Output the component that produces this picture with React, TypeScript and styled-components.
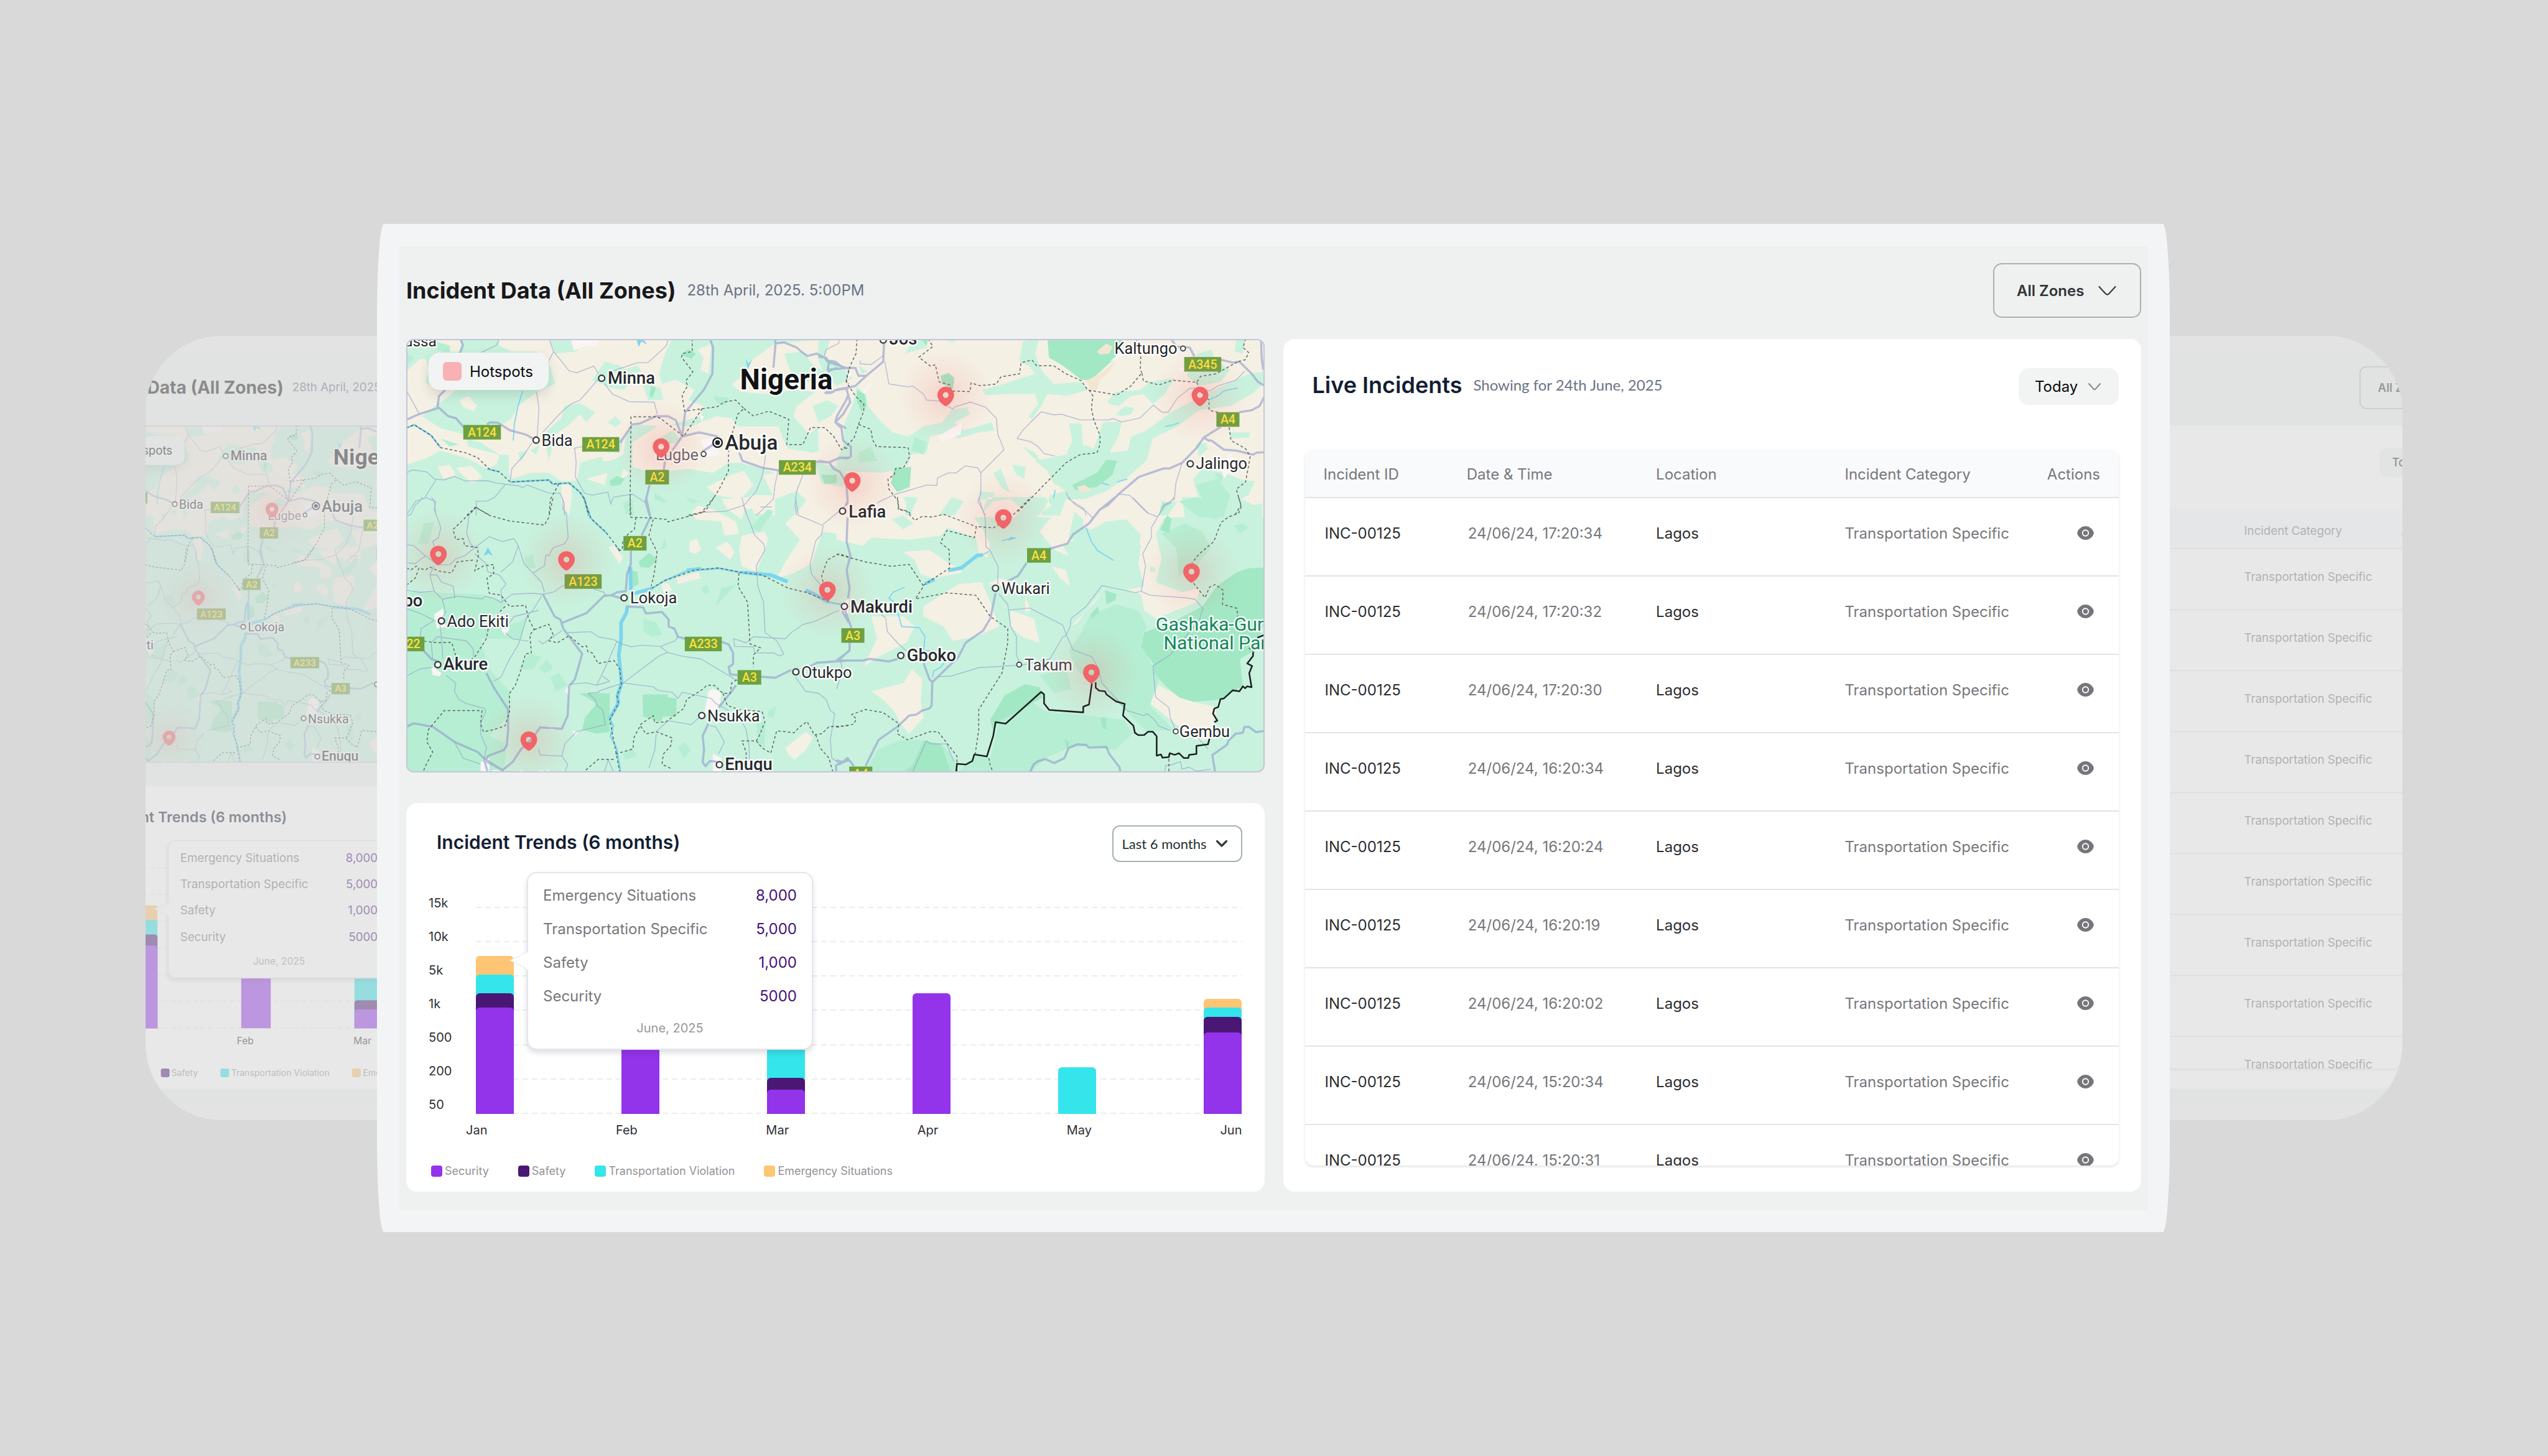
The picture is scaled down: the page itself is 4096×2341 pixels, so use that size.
import React, { useId } from "react";
import styled, { createGlobalStyle, css } from "styled-components";

const GlobalStyle = createGlobalStyle`
  *, *::before, *::after { box-sizing: border-box; }
  body { margin: 0; background: #d9d9d9; }
  h1, h2, p, ul, dl, dd, dt { margin: 0; padding: 0; }
  ul { list-style: none; }
`;

const sans = `Inter, "Liberation Sans", sans-serif`;

/* ---------- Stage ---------- */

const Stage = styled.main`
  min-height: 100vh;
  display: grid;
  align-items: center;
  overflow: hidden;
  background: #d9d9d9;
  font-family: ${sans};
  font-size: 24px;
  color: #1c1c1e;
`;

const Backdrop = styled.div`
  grid-area: 1 / 1;
  display: flex;
  justify-content: space-between;
  padding: 0 234px;
  opacity: 0.4;
`;

const BackdropHalf = styled.div<{ $side: "left" | "right" }>`
  display: flex;
  width: 420px;
  height: 1261px;
  overflow: hidden;
  justify-content: ${(p) => (p.$side === "left" ? "flex-start" : "flex-end")};
  border-radius: ${(p) =>
    p.$side === "left" ? "122px 0 0 122px" : "0 122px 122px 0"};
`;

const Shrunk = styled.div<{ $side: "left" | "right" }>`
  flex: none;
  width: calc(100vw - 1215px);
  transform: scale(0.778);
  transform-origin: top ${(p) => p.$side};
  margin-${(p) => p.$side}: -152px;
`;

const Foreground = styled.div`
  grid-area: 1 / 1;
  z-index: 1;
  padding: 0 608px 0 606px;
`;

/* ---------- Frame ---------- */

const Frame = styled.div`
  padding: 36px 35px 35px 36px;
  background: #f2f4f6;
  border-radius: 11px / 150px;
`;

const Screen = styled.div`
  padding: 27px 11px 30px;
  background: #eef1f0;
`;

const TopBar = styled.header`
  display: flex;
  align-items: center;
  justify-content: space-between;
  height: 88px;
  margin-bottom: 34px;
`;

const Heading = styled.div`
  display: flex;
  align-items: center;
  gap: 18px;
`;

const PageTitle = styled.h1`
  font-size: 36px;
  font-weight: 700;
  line-height: 48px;
  color: #18181b;
`;

const Muted = styled.p<{ $face?: string }>`
  font-family: ${(p) => p.$face ?? "inherit"};
  font-size: 24px;
  line-height: 32px;
  color: #6b7285;
`;

const Columns = styled.div`
  display: grid;
  grid-template-columns: minmax(0, 1fr) minmax(0, 1fr);
  gap: 30px;
`;

const Stack = styled.div`
  display: flex;
  flex-direction: column;
  gap: 49px;
`;

const Card = styled.section`
  background: #fff;
  border-radius: 18px;
`;

const CardTitle = styled.h2<{ $large?: boolean }>`
  font-size: ${(p) => (p.$large ? 36 : 30)}px;
  font-weight: 600;
  line-height: 54px;
  color: #131e33;
`;

/* ---------- Drop-down ---------- */

const kinds = {
  zones: css`
    width: 238px;
    height: 88px;
    padding: 0 36px;
    border: 2px solid #adb0b0;
    border-radius: 14px;
    background: transparent;
    color: #333338;
    font: 600 24px ${sans};
  `,
  day: css`
    width: 161px;
    height: 59px;
    padding: 0 26px;
    border: 0;
    border-radius: 16px;
    background: #f1f4f3;
    color: #0b0b0c;
    font: 400 24px ${sans};
  `,
  range: css`
    width: 209px;
    height: 59px;
    padding: 0 14px;
    border: 2px solid #a6b2b0;
    border-radius: 12px;
    background: #fff;
    color: #24302f;
    font: 400 22px Lato, ${sans};
  `,
};

const Picker = styled.div`
  display: inline-grid;
  align-items: center;
`;

const Select = styled.select<{ $kind: keyof typeof kinds }>`
  grid-area: 1 / 1;
  appearance: none;
  margin: 0;
  ${(p) => kinds[p.$kind]}
`;

const Chevron = styled.svg<{ $inset: number }>`
  grid-area: 1 / 1;
  justify-self: end;
  margin-right: ${(p) => p.$inset}px;
  fill: none;
  stroke-linecap: round;
  stroke-linejoin: round;
  pointer-events: none;
`;

function Dropdown({ kind, label, options }: { kind: keyof typeof kinds; label: string; options: string[] }) {
  return (
    <Picker>
      <Select $kind={kind} aria-label={label}>
        {options.map((o) => (
          <option key={o}>{o}</option>
        ))}
      </Select>
      {kind === "zones" && (
        <Chevron $inset={40} width="29" height="17" viewBox="0 0 29 17" stroke="#3a3a3e" strokeWidth="2.2">
          <path d="M1.5 2 11.8 13.2Q14.5 16 17.2 13.2L27.5 2" />
        </Chevron>
      )}
      {kind === "day" && (
        <Chevron $inset={29} width="20" height="12" viewBox="0 0 20 12" stroke="#85888c" strokeWidth="2">
          <path d="M1 1 8.2 9.2Q10 11 11.8 9.2L19 1" />
        </Chevron>
      )}
      {kind === "range" && (
        <Chevron $inset={23} width="20" height="13" viewBox="0 0 20 13" stroke="#2f3d3b" strokeWidth="3.2">
          <path d="M2.5 2.5 10 10 17.5 2.5" />
        </Chevron>
      )}
    </Picker>
  );
}

/* ---------- Map ---------- */

const MapCard = styled.section`
  position: relative;
  height: 697px;
  overflow: hidden;
  border: 2px solid #c6c4d6;
  border-radius: 12px;
  background: #c8f2de;
`;

const MapSvg = styled.svg`
  display: block;
  width: 100%;
  height: 100%;
  font-family: Roboto, ${sans};
`;

const HotspotKey = styled.div`
  position: absolute;
  top: 20px;
  left: 34px;
  display: flex;
  align-items: center;
  gap: 13px;
  height: 60px;
  padding: 0 25px 0 23px;
  border-radius: 18px;
  background: #f1f4f3;
  box-shadow: 0 8px 18px rgba(60, 60, 60, 0.16);
  font-size: 24px;
  color: #0b0b0c;
`;

const HotspotSwatch = styled.span`
  width: 30px;
  height: 30px;
  border-radius: 6px;
  background: #f8b1b4;
`;

/* The map is plotted on four survey sheets; each one has an origin and a grid step. */
const sheets = {
  nw: [600, 350, 0.5102],
  ne: [1350, 350, 0.5102],
  sw: [650, 820, 0.4783],
  se: [1380, 820, 0.4783],
} as const;
type Sheet = keyof typeof sheets;
type Plot = [Sheet, string[]][];

const plot = (sheet: Sheet, points: string, close = false) => {
  const [ox, oy, step] = sheets[sheet];
  const d = points
    .split(" ")
    .map((p) => p.split(",").map(Number))
    .map(([x, y]) => `${(ox + x * step).toFixed(1)} ${(oy + y / 3).toFixed(1)}`)
    .join("L");
  return `M${d}${close ? "Z" : ""}`;
};
const plotAll = (layer: Plot, close = false) =>
  layer.map(([s, lines]) => lines.map((l) => plot(s, l, close)).join("")).join("");

const sand: Plot = [
  ["nw", [
    "440,620 1000,620 975,700 955,800 965,850 1010,830 1070,880 1050,930 1100,960 1090,1010 1000,1050 960,1060 880,1050 850,1090 840,1200 800,1230 700,1250 690,1330 640,1330 600,1290 540,1290 480,1320 470,1290 470,1200 440,1200 380,1140 330,1120 340,1060 440,1060 480,1020 500,960 560,890 620,850 600,740 560,690 480,690 440,660",
    "230,620 300,620 320,650 310,690 270,690 250,650",
    "139,790 180,730 200,722 215,780 200,840 240,880 300,880 270,920 230,960 190,1010 250,1070 330,1100 340,1160 440,1200 430,1250 400,1270 340,1220 250,1180 200,1220 160,1240 139,1250",
    "870,1140 960,1050 1060,1060 1140,1010 1190,1020 1210,1060 1340,1060 1370,1170 1450,1190 1568,1150 1568,1500 1420,1500 1440,1440 1400,1380 1330,1420 1290,1300 1330,1290 1220,1240 1180,1240 1130,1290 1050,1270 930,1290 870,1260",
    "1240,750 1330,650 1568,620 1568,1110 1470,1060 1440,1100 1390,1010 1400,960 1460,890 1400,880 1300,900 1220,890 1190,850 1240,800",
  ]],
  ["ne", ["0,620 1440,620 1440,1510 0,1510"]],
  ["se", [
    "0,0 500,0 455,70 500,150 530,230 520,300 490,280 480,200 380,150 360,190 250,210 120,200 90,240 0,210",
    "750,0 1170,0 1130,100 1100,180 1120,300 1100,420 1190,470 1250,450 1240,520 1100,600 1060,560 1050,480 1000,460 1060,440 1040,330 1050,240 1000,110 900,150 780,240 800,290 750,260 700,170 740,100",
  ]],
];

const meadow: Plot = [
  ["nw", [
    "740,830 780,740 830,760 880,820 840,880 800,870",
    "650,960 700,945 750,990 720,1040 700,1000 660,1060 620,1100 600,1230 580,1100 640,1020",
    "790,1040 815,1010 835,1040 815,1065", "750,1130 840,1120 830,1190 790,1190",
    "840,780 885,760 900,790 860,800", "690,690 700,640 640,620 600,620 620,700",
    "540,1180 570,1150 560,1200", "900,840 960,870 970,930 920,930", "500,1190 530,1180 510,1240",
    "930,1140 1000,1080 1030,1130 990,1150", "700,1290 780,1250 770,1210 700,1240",
    "1450,960 1500,930 1535,960 1510,1010 1470,1040 1460,990", "1360,700 1420,690 1450,750 1490,790 1440,840 1380,790",
    "1380,1080 1430,1080 1440,1170 1380,1150", "1460,1240 1540,1260 1568,1300 1550,1360 1480,1340",
  ]],
  ["ne", [
    "0,620 40,620 20,720 80,760 110,820 60,860 20,800 0,740",
    "125,865 155,900 160,960 205,1040 240,1090 290,1110 340,1060 400,1040 430,980 480,965 490,1000 440,1040 470,1080 560,1040 570,1080 520,1090 450,1120 420,1090 360,1110 350,1190 300,1200 290,1250 240,1280 200,1290 60,1280 60,1230 80,1150 85,1040 110,960",
    "320,620 355,620 350,670 280,700 300,650", "390,620 470,620 430,645", "130,760 160,790 140,800", "0,950 30,945 40,980 0,1010",
    "660,640 715,620 700,700 720,780 760,850 850,840 870,880 800,910 740,900 720,960 690,1025 680,1010 710,950 700,900 620,900 540,905 530,880 620,840 700,800 680,760 650,740",
    "935,935 960,890 1040,880 1070,840 1150,820 1120,900 1080,950 1050,900 1010,910 970,960 940,950",
    "960,1000 990,960 1020,970 1010,1000 980,1010",
    "1437,790 1437,850 1400,900 1330,960 1230,980 1160,1060 1080,1120 1060,1230 1000,1310 930,1380 860,1420 800,1420 780,1500 720,1500 750,1400 800,1380 760,1340 740,1280 700,1230 800,1200 820,1130 810,1045 850,1045 855,1150 890,1170 920,1040 980,1035 970,1110 940,1190 1000,1180 1010,1110 1060,1080 1140,990 1240,910 1320,850 1390,800",
    "660,1160 700,1190 720,1240 690,1210", "565,1290 590,1270 620,1390 590,1360", "625,1250 670,1260 665,1320 640,1300",
    "1190,810 1225,700 1270,680 1280,730 1330,780 1300,840 1230,860",
    "1210,1320 1240,1270 1310,1290 1380,1330 1410,1330 1390,1400 1350,1430 1380,1510 1220,1510 1230,1420",
    "1325,1090 1395,1090 1390,1115 1335,1120", "430,1410 470,1430 440,1500 390,1500", "285,1430 310,1440 300,1500 280,1500",
    "1380,626 1350,626 1345,690 1370,700", "1110,1440 1160,1430 1130,1500 1100,1500", "520,1380 570,1390 560,1420 520,1420",
    "1220,1150 1250,1140 1260,1170 1230,1210",
  ]],
  ["se", [
    "190,110 230,90 265,130 230,160", "500,80 540,20 600,10 640,60 590,140 660,130 740,40 720,0 520,0", "230,0 280,0 270,40 240,30",
    "820,70 850,110 850,150 880,160 930,120 1000,110 1050,190 1020,330 950,430 880,380 870,300 900,260 840,220 800,200",
    "1080,340 1100,350 1095,370 1080,370", "1380,0 1440,40 1468,30 1468,200 1340,140 1200,100 1190,0",
  ]],
];

const sandIsles: Plot = [
  ["nw", [
    "310,930 340,910 368,960 355,985 320,960", "240,1260 280,1250 300,1300 260,1320", "300,1265 350,1255 385,1310 350,1340 320,1300",
    "640,1350 670,1340 675,1400 665,1500 640,1440", "1080,680 1125,650 1115,800 1090,780 1100,720",
    "1190,1300 1230,1280 1260,1350 1220,1420 1140,1400 1110,1360", "1250,1400 1330,1400 1330,1500 1260,1490",
    "720,1320 790,1290 780,1350", "840,1270 860,1290 830,1330",
  ]],
  ["sw", [
    "580,0 615,0 605,70 590,70", "740,250 760,235 790,300 780,330", "1020,220 1045,205 1060,260 1040,280 1020,270",
    "1110,250 1150,220 1175,270 1160,310", "1200,190 1280,170 1290,210 1270,300 1250,370 1200,340 1190,260",
    "1030,70 1050,40 1100,60 1180,120 1190,180 1140,190 1130,120 1040,110", "1130,10 1240,0 1310,10 1310,50 1210,60 1200,110 1150,60",
    "1350,130 1400,60 1430,0 1568,0 1568,190 1480,170 1460,240 1440,330 1370,380 1320,400 1350,320 1400,210", "975,400 1050,370 1060,400 980,430",
    "920,420 950,430 960,460 930,470", "1350,1240 1420,1160 1445,1190 1420,1250 1380,1300 1360,1270",
  ]],
  ["se", [
    "230,270 320,260 390,330 430,350 430,375 330,400 290,380 270,310", "100,820 140,700 120,590 230,590 270,640 240,720 130,800 100,835",
    "300,540 420,430 500,420 530,520 560,640 480,690 400,710 370,640 300,590", "520,430 560,400 620,420 590,440",
    "600,560 680,600 700,720 640,690 600,640", "740,340 790,360 805,440 770,400", "805,640 890,520 930,440 860,560 830,620",
    "120,960 230,920 260,850 295,900 290,1010 300,1090 250,1170 220,1120 200,1060 160,1000",
    "1080,1020 1110,930 1200,1000 1310,1040 1300,1110 1280,1200 1240,1200 1150,1100", "650,490 670,560 650,570",
  ]],
];

const woods: Plot = [
  ["nw", [
    "940,1390 985,1430 975,1440 940,1420", "1135,910 1180,920 1180,940 1160,960 1135,930", "230,640 280,660 280,700 240,680",
    "250,1120 310,1150 280,1160", "139,700 165,720 139,760", "1040,1410 1085,1430 1060,1440", "850,1430 870,1420 875,1500 845,1490",
  ]],
  ["ne", ["1220,1350 1290,1320 1330,1400 1310,1510 1230,1510 1240,1420", "310,1110 350,1140 340,1200 300,1180", "130,1190 170,1160 190,1230 130,1240", "1100,1500 1110,1430 1140,1440", "1280,1290 1310,1300 1300,1340"]],
  ["sw", [
    "45,470 100,470 300,480 390,520 370,560 300,620 340,640 430,620 460,590 440,700 300,700 330,850 400,960 400,1080 330,1180 390,1220 380,1360 45,1360",
    "430,850 470,770 510,790 480,850", "500,850 530,800 550,850 520,870", "860,600 905,620 925,680 890,690 860,660", "540,890 560,960 600,930 570,870",
    "85,230 105,130 140,120 120,230", "450,300 480,280 490,350 460,350", "1060,450 1080,430 1090,470 1070,480", "1110,540 1130,450 1180,430", "790,30 820,10 825,70 800,80",
    "1230,150 1290,60 1310,70 1260,170", "1290,1060 1320,1030 1310,1090 1290,1090", "920,260 935,200 940,250", "980,1240 1000,1210 1025,1250 1000,1290",
    "1250,1100 1280,1120 1280,1240 1255,1230", "790,1270 820,1240 840,1280 800,1300",
  ]],
  ["se", [
    "840,680 870,590 960,530 1040,560 1070,640 1050,720 1110,900 1080,1030 1160,1150 1070,1160 1000,1060 960,1000 900,930 830,860 800,760",
    "420,1360 480,1280 530,1290 560,1110 650,990 720,1060 860,1080 990,1100 1020,1170 960,1250 870,1230 800,1240 720,1290 670,1360",
    "100,1360 140,1250 220,1200 300,1200 370,1230 420,1330 410,1360", "1120,180 1200,130 1260,170 1290,250 1240,340 1180,390 1170,250",
    "1180,20 1240,0 1330,60 1310,110 1240,90", "700,880 790,850 810,950 750,970", "1370,140 1400,130 1420,150 1390,180",
  ]],
];

const parks: Plot = [
  ["nw", ["795,1330 820,1305 845,1320 830,1350 800,1355", "1025,705 1050,680 1075,700 1060,725", "1480,1300 1530,1300 1530,1340 1490,1345", "930,860 945,870 935,920 925,910"]],
  ["ne", [
    "740,626 985,626 960,720 910,790 880,830 850,830 790,760 745,720", "395,810 420,795 440,820 435,875 400,850", "125,880 150,900 155,960 140,990 125,940",
    "245,1270 300,1260 295,1360 255,1385 235,1340", "820,1350 900,1290 930,1225 965,1230 950,1300 900,1360 830,1375", "330,626 355,626 350,660",
  ]],
  ["sw", [
    "858,975 945,975 945,990 975,995 975,1085 930,1085 920,1110 860,1085", "640,970 745,970 745,1160 700,1170 650,1150 660,1090 700,1020",
    "845,320 880,275 910,310 880,350 850,345", "820,360 840,370 845,430 820,450",
  ]],
  ["se", [
    "1475,348 1475,620 1440,760 1390,800 1400,930 1330,1000 1230,1012 1180,990 1130,930 1095,870 1090,820 1050,740 1060,670 1180,600 1260,540 1310,440 1380,370 1420,352",
    "530,1100 580,980 650,925 700,940 712,990 560,1110 540,1160", "230,1360 260,1330 300,1205 360,1220 395,1360",
    "925,460 965,480 960,510 930,530", "875,580 900,540 905,570 880,600", "1115,160 1140,90 1155,110 1145,180", "910,1090 930,1090 930,1150 915,1140",
    "785,1195 805,1210 795,1250",
  ]],
];

const clay: Plot = [
  ["ne", ["900,690 930,650 950,665 940,700 910,705", "865,835 920,790 960,740 940,790 910,830 900,880 880,880", "835,1360 860,1350 885,1375 850,1390"]],
];

const towns: Plot = [
  ["nw", ["670,626 765,626 750,665 725,660 680,685", "1090,1130 1150,1110 1150,1200 1110,1210", "1085,1000 1100,1010 1095,1040"]],
  ["ne", ["385,1110 465,1040 460,1100 400,1135", "1300,1260 1330,1190 1350,1230 1310,1320", "940,740 1020,640 1000,700", "90,780 110,800 95,830", "140,890 175,840 150,900", "1160,780 1180,765 1180,790"]],
  ["sw", ["1085,960 1100,945 1130,970 1120,1060 1070,1070", "1100,1270 1130,1290 1130,1360 1100,1360", "590,960 610,920 605,980", "370,650 400,650 385,685", "130,830 165,870 160,885 135,880", "140,580 170,550 180,640 150,650", "300,1310 330,1290 330,1360 300,1360", "535,1130 560,1145 545,1155", "615,1155 640,1160 625,1180", "1530,560 1568,500 1568,580"]],
];

const highways: Plot = [
  ["nw", [
    "139,1028 180,1000 245,968 275,1010 300,1020 325,1065", "400,1050 410,1040 435,1042 475,1080 525,1100 548,1120", "315,626 322,660 312,700", "265,880 245,910 240,965",
    "830,1140 870,1050 895,1045 945,1010 985,1010 1010,1030 1030,1110 1085,1090 1145,1110", "1120,626 1130,670 1128,800 1100,880 1040,990 1030,1110 975,1230 970,1290",
    "925,1350 912,1430 925,1500", "1130,1150 1095,1185", "1215,1190 1225,1230 1290,1265 1345,1278", "1462,1235 1505,1238 1540,1215 1568,1215",
    "1330,626 1332,650 1325,770", "1332,650 1360,645 1400,670 1415,690 1435,712 1465,700 1490,720 1500,740 1568,775", "1505,740 1500,780 1568,770", "1495,890 1568,870",
    "1568,900 1560,930 1530,1010 1525,1040 1560,1070",
  ]],
  ["ne", [
    "0,715 25,720 30,735 55,740 80,770 120,772 130,810 155,810 210,740 212,650", "30,790 60,770", "155,810 120,860 90,870 65,875 40,895 20,895",
    "90,870 103,940 80,1000 55,1040 75,1070 80,1130 105,1160 105,1210 95,1218 70,1215 35,1238 0,1230", "35,1238 50,1270 70,1285 90,1340 95,1430 88,1450",
    "1140,626 1155,665 1200,670 1215,715", "1300,730 1340,745 1360,740 1400,800 1420,840 1440,858", "1440,915 1425,960 1400,980 1360,990",
    "1300,1062 1245,1115 1220,1170 1175,1240 1135,1268 1115,1268 1035,1310 970,1395 935,1450 910,1470 895,1500", "1245,1115 1260,1130 1270,1130 1310,1175 1350,1180 1405,1200 1415,1190 1440,1188", "1430,626 1432,720 1437,780",
  ]],
  ["sw", [
    "870,0 885,100 875,130 855,190", "818,265 818,330 805,380 800,470", "800,540 860,545 870,575 925,568 948,605 948,640 968,650 980,690 1005,700", "1130,715 1155,728 1170,770 1170,825 1155,840 1160,875 1185,880",
    "1265,888 1315,893 1370,855", "1430,840 1460,818 1568,808", "800,465 770,470 750,485 725,488 665,573 580,622", "750,485 785,500", "515,480 555,590 575,605 585,650 650,775 625,900 605,935 600,1080 580,1145 505,1138 480,1190 440,1245 410,1310 375,1350 320,1300",
    "105,760 130,800 150,810", "320,870 345,940 395,1050 395,1150 390,1230 380,1250 325,1280 315,1310 325,1365", "45,1135 70,1118 135,1135 210,1210 290,1260 325,1310 370,1345",
    "1180,930 1165,960 1120,1040", "1085,1120 1065,1180 1070,1250 1065,1310 1075,1330 1090,1305 1115,1308", "1525,1365 1525,1325 1568,1300", "1545,560 1568,620", "1568,760 1535,805",
  ]],
  ["se", [
    "38,100 35,220 48,290 35,360 45,450 40,500", "30,560 52,650", "45,715 45,760 0,808 90,808 115,800 180,812 210,800", "960,0 905,65 870,130 815,185 795,230 735,255", "655,325 625,390 590,415",
    "548,475 530,600 505,660 445,720 420,790 330,915 328,1030 320,1045 295,1055 275,1075 250,1080 210,1135 145,1200 100,1330", "300,820 320,900 330,915",
    "665,1365 680,1320 695,1305 720,1295 750,1315 785,1290 800,1240 830,1222 860,1225 870,1238 930,1235 940,1270 975,1335 978,1365", "1475,1156 1445,1162 1420,1135 1405,1137 1400,1165 1375,1170 1350,1205 1345,1225 1295,1275 1305,1365", "0,1300 20,1310 38,1290 60,1330",
  ]],
];

const lanes: Plot = [
  ["nw", [
    "600,626 615,690 665,785 690,795 745,762 760,800", "985,626 980,660 920,745 885,745 800,790", "615,690 600,735", "760,825 735,870 700,930 670,950 640,990 580,1090",
    "780,850 805,900 860,938 940,940 950,1000", "560,890 568,970 562,1110", "440,626 430,660 380,695", "139,880 180,995", "545,1140 520,1200 480,1270 475,1330",
    "683,1165 688,1240 685,1310 715,1390 740,1400 790,1385 800,1445 808,1410 870,1395 910,1435", "139,1290 160,1275 205,1285 230,1320 260,1325 295,1308 330,1330 400,1328 430,1340 505,1355 515,1362 530,1350 600,1390 635,1390 650,1440 650,1500",
    "235,1325 200,1410 230,1430 235,1500", "200,1415 170,1430 139,1500", "460,1345 425,1410 400,1430 365,1430 365,1500", "1300,1200 1290,1300 1270,1380 1230,1450 1170,1480 1090,1485",
    "1340,1280 1330,1350 1325,1420 1270,1500", "1230,1450 1240,1500", "1420,1300 1400,1380 1395,1450 1400,1500", "1283,1458 1320,1458", "680,1168 710,1160",
  ]],
  ["ne", [
    "70,626 65,650 25,680 20,710", "215,740 228,850 290,865 305,860 340,900 350,930 390,935 435,975 440,965 490,940 540,965 575,1020 580,1100 600,1175 525,1290 525,1390 515,1430 540,1500",
    "525,1290 515,1265 475,1255 445,1290 420,1290 385,1315 383,1352 350,1350 250,1395 200,1430 190,1440", "765,1207 730,1195 710,1160 685,1135 642,1120 660,1080 720,988 760,1003 785,1000 845,1028 940,1028 950,1020 980,1038 1040,1018 1082,955 1110,990 1130,990 1160,920 1200,872 1225,870 1265,885 1290,860 1350,830 1378,785",
    "1175,1240 1155,1340 1150,1420 1115,1450 1100,1500", "970,1395 1005,1400 1050,1470 1065,1490", "800,1385 810,1420 860,1470 865,1500", "135,735 135,750 170,755 210,710",
  ]],
  ["sw", [
    "45,95 60,85 75,40 90,20 100,0", "130,0 145,25 140,60 163,150 155,200 135,220 140,240", "45,235 70,240 110,290 130,310 150,335 195,333 215,305 245,290 280,250 265,230 252,180 260,90 285,50", "45,325 75,328 110,290",
    "280,250 330,195 375,220 415,205 430,240 450,330 480,375 510,420 520,470", "280,280 320,330 325,370 365,385 388,430 370,460 375,520", "480,375 520,340 525,285 535,290 550,250 590,230 602,200 595,80 585,60 582,0",
    "45,460 90,470 140,465 168,505 180,570 160,610", "168,505 220,490 305,503 315,490 345,500 370,520 410,480 475,475 515,480 550,470 580,440 600,430", "690,455 725,470 730,485", "125,385 150,385 165,420 205,440 212,500", "140,340 125,385 140,465",
    "430,240 410,320 370,370", "600,670 680,665 705,690 760,705 785,725 820,740 855,732 920,738 970,710 980,690", "770,710 740,810 720,870 700,930", "605,925 665,918 700,930 745,910 720,885", "705,960 745,940 790,920 915,785 945,768 920,740",
    "945,768 990,785 1060,800 1185,908", "790,918 895,938 910,955 960,965 980,995 995,965 1095,995 1110,1020 1155,1055", "1385,890 1420,960 1465,970 1490,1000 1505,1055 1520,1070 1505,1200 1510,1290 1540,1320",
    "1200,0 1210,60 1245,190 1275,230 1280,260 1250,340 1255,440 1275,520 1280,670 1320,710 1345,775 1330,785 1310,770 1245,770 1240,740 1175,738 1172,700 1215,720 1240,690 1350,700 1370,670 1410,630 1450,615 1540,555",
    "1385,0 1395,90 1480,140 1475,185 1455,215 1435,330 1440,380 1475,440", "1480,135 1568,30", "510,490 480,560 460,590 430,730 400,800 370,890 345,910", "385,670 410,700 465,712", "500,560 415,590 385,650",
    "180,880 215,920 210,960 225,1000 250,1020 315,1045 318,1060 300,1120 300,1170 320,1240 310,1310", "210,1210 240,1290 300,1320", "500,1245 505,1275 580,1280 600,1320 590,1365", "580,1280 590,1220 630,1160 730,1125 720,1050 700,1030 695,1000 670,970 710,965",
    "1090,1130 1110,1135 1140,1210 1120,1270", "905,1170 900,1250 880,1340", "905,1160 945,1105 1025,1125 1060,1080", "725,1365 740,1300 760,1365", "1190,1080 1215,1150 1225,1230 1228,1365", "45,885 90,850 135,840",
    "160,630 165,690 170,800", "135,800 130,720 150,690 250,710 275,750 275,790", "500,710 515,725 580,660", "45,550 100,580 140,610 95,650 92,700",
  ]],
  ["se", [
    "490,0 512,100 515,245 530,265 557,345 555,430", "560,480 590,530 600,640 620,690 620,780 630,815", "595,558 665,548 780,633 793,685 815,755 880,790 900,840 915,920 960,990 1000,1055 1060,1080 1070,1070 1095,1100 1110,1130 1150,1155",
    "640,830 735,800 780,690 790,685 805,640 808,600 860,540 915,437 1030,472 1050,465 1080,485 1200,497 1235,505 1262,550 1250,610 1150,780 1090,835 1100,990 1145,1040 1150,1090 1165,1140", "1050,465 1065,340 1055,280 1085,200 1085,150 1130,40 1150,30 1162,0",
    "800,0 820,35 860,70 885,105", "1020,0 1075,80 1108,98", "155,580 170,600 175,665 210,720 240,760", "350,887 395,885 490,843 640,830", "260,1365 310,1205 325,1220 380,1220 390,1260 405,1305",
    "1130,1365 1135,1325 1150,1325 1185,1308 1190,1345 1215,1335 1240,1355 1290,1345", "15,810 20,860 0,950", "1245,1190 1280,1245",
  ]],
];

const districts: Plot = [
  ["nw", [
    "1063,626 1063,690 1032,700 1028,718 1065,790 1042,835 1048,860 1030,905 1038,985 1145,962 1165,940 1203,930 1230,972 1210,1000 1180,1160 1180,1280 1150,1370 1105,1480 1050,1500",
    "1095,972 1035,1110 960,1020 945,1013 865,1013 862,1500", "1230,972 1260,1008 1310,985 1375,1025 1368,1150 1420,1150 1445,1066 1490,1066 1520,1110 1545,1175 1568,1165",
    "139,1068 165,1052 220,1105 250,1165 330,1190 370,1215 408,1272 440,1285 475,1335 600,1325 612,1345 665,1340 700,1385 715,1420 728,1500", "632,1345 605,1420 600,1500", "1568,780 1560,830 1568,850", "335,1500 362,1460 410,1500",
  ]],
  ["ne", [
    "125,626 122,700 103,760 90,840 120,910 147,950 147,985 130,1050 115,1120 95,1150 78,1175", "130,1050 170,1075 175,1125 188,1160 290,1165 295,1210 275,1265 250,1268 245,1300 225,1320 228,1370 258,1430 260,1468 290,1480 300,1495",
    "355,626 370,665 325,718 362,762 378,755 390,840 425,855 430,885 490,888 493,845 520,858 550,855 575,850 590,815 650,800 655,745 690,732 705,760 760,760 800,800 850,835 870,880 965,905 1010,860 1045,795 1050,835 1100,855 1145,832 1222,842 1235,812 1285,800 1355,740",
    "1042,690 1040,780 1045,795", "1025,626 1030,650", "875,880 887,910 882,970 890,1030 910,1105 910,1150 900,1190 845,1200 800,1240 735,1340 640,1490", "1380,626 1372,670 1390,695 1380,730 1355,740",
    "1222,842 1240,900 1262,930 1262,980 1290,990", "1327,1065 1333,1130 1380,1170 1395,1210 1380,1335 1350,1370 1365,1450 1345,1500",
  ]],
  ["sw", [
    "285,50 330,90 400,118 520,138 535,100 550,0", "285,50 205,160 215,210 240,205 245,240 290,250 292,290 280,365 310,340 345,333 345,380 322,400 330,475 370,485 400,540 455,535 465,600 485,655 470,680 475,770 455,775 440,850 420,930 400,970 400,1060 385,1130 345,1150 310,1160 300,1120 305,1055 175,1055 120,1150 115,1210 135,1260 110,1330 100,1365",
    "45,435 75,400 88,350 110,360 125,345 155,365 200,375 220,320 280,310", "45,350 60,360 80,340", "385,540 330,620 320,700 280,790 250,820", "105,712 150,720 200,718 212,770 215,800",
    "485,655 535,628 550,680 535,710 565,720 605,685 650,740 665,735 670,765 685,770 705,822 760,808 780,850 785,930 770,980 775,1020 745,1100 765,1250 780,1365", "815,0 818,100 890,103 942,110 945,122 1060,78 1105,0",
    "835,100 830,160 810,180 790,215 788,260 775,265", "895,110 880,190 908,270 898,380 888,440", "655,0 680,105 730,170 780,265", "890,450 935,412 1040,360 1120,350 1200,372 1270,385 1360,450 1420,470 1500,515",
    "1190,375 1187,440 1220,520 1228,725 1265,745 1240,780 1240,840", "765,1270 825,1245 828,1190 850,1130 870,1170 905,1160 960,1190 955,1230 930,1270 925,1320 960,1345", "850,1125 895,1080 900,1115 940,1110 1000,1045 1010,1000 1065,950 1080,930 1105,930 1135,970 1160,970 1165,920 1185,900",
    "1135,970 1150,1030 1190,1050 1270,1060 1280,1110 1260,1180 1250,1205 1200,1205 1215,1260 1215,1365", "1250,1205 1270,1240 1300,1265 1320,1155 1380,1165 1400,1135 1425,1110 1450,1175 1475,1170 1500,1135 1568,1130", "1455,1175 1470,1240 1500,1290 1515,1365",
    "650,1365 705,1297 765,1297", "1480,420 1475,390 1495,310 1535,280 1568,295",
  ]],
  ["se", [
    "0,282 100,320 190,342 250,332 300,440 272,503 380,473 480,485 530,590 590,650 590,720 570,870 490,1050 490,1150 478,1270", "300,435 390,350 388,260 358,225 380,165 475,200 482,145 540,152 600,100 670,0",
    "210,0 213,60 240,68 270,115 295,95 330,98 370,85 480,145", "0,1138 60,1122 68,1095 52,1075 100,1050 160,1065 215,1120 210,1170 245,1200 320,1160 350,1160 415,1280 415,1365",
    "1385,0 1395,45 1385,80 1350,98 1325,125 1300,220 1250,280 1225,325", "1230,425 1270,497 1285,445 1305,432 1332,460 1330,530 1380,550 1382,590", "525,1290 530,1330 542,1365", "1145,1270 1145,1365", "1420,745 1440,770",
  ]],
];

const frontier: Plot = [
  ["se", [
    "412,1365 415,1318 445,1322 468,1305 475,1272 518,1282 540,1180 548,1112 583,1120 705,963 715,975 715,1020 733,1052 850,1064 850,1036 870,1025 880,920",
    "893,915 893,942 905,957 925,960 930,975 963,1010 993,1022 987,1080 1023,1130 1028,1165 1040,1177 1060,1176 1073,1160 1090,1160 1103,1182 1103,1278 1118,1272 1123,1288 1145,1285 1148,1266 1165,1274 1180,1266 1197,1290 1212,1290 1215,1274 1240,1270 1240,1230 1280,1222 1285,1195",
    "1302,1112 1312,1105 1297,1070 1302,1045 1315,1038 1323,998 1335,995 1365,955 1388,960 1400,935 1408,945 1415,935 1430,940 1422,870 1432,835 1415,822 1435,785 1435,768",
    "1450,695 1475,680",
  ]],
];

const rivers: Plot = [
  ["nw", ["139,1068 165,1052 220,1105 250,1165", "475,1335 600,1325 612,1345 665,1340 700,1385 715,1420 728,1500", "400,1270 440,1285"]],
  ["sw", ["655,0 680,105 735,180", "890,452 935,412 1010,365 1120,352 1200,374", "745,1095 757,1130 748,1180 768,1240 783,1365", "1500,520 1560,535", "765,240 780,265"]],
];

const wideRivers: Plot = [
  ["sw", ["816,345 818,460", "805,545 803,570 784,620 784,700 776,780 782,860 786,920 772,980 774,1020 745,1095", "825,478 890,452", "1200,372 1300,385 1358,418", "1010,362 1060,354", "1420,460 1450,480 1500,520"]],
  ["se", ["305,428 338,406", "385,362 430,350 485,288 505,285"]],
];

const brooks: Plot = [
  ["nw", ["515,885 500,960 488,1050 485,1130"]],
  ["ne", ["1120,1060 1140,1055 1165,1042", "1260,930 1290,910 1310,885 1355,870", "915,1340 940,1350", "965,1335 998,1320", "765,1375 760,1415"]],
  ["se", ["570,215 615,200", "860,150 878,220 900,265 955,313", "235,445 195,470 180,500 200,520 225,640 285,645 305,690 300,760 340,760", "330,890 335,860 360,840 370,820", "505,285 525,268"]],
];

const lakes: Plot = [
  ["nw", ["882,626 890,668 898,640 917,656 903,626", "1235,722 1242,780 1257,728 1244,750"]],
  ["sw", ["310,292 325,248 343,292 327,278"]],
  ["se", ["590,215 600,195 620,203"]],
];

type Place = { name: string; x: number; y: number; size: number; weight?: number; ink?: string; dot?: [number, number]; r?: number; end?: boolean };
const places: Place[] = [
  { name: "ussa", x: 721, y: 572, size: 25, end: true },
  { name: "Minna", x: 1003, y: 633, size: 28, weight: 500, dot: [993, 624] },
  { name: "Bida", x: 894, y: 736, size: 26, dot: [885, 726] },
  { name: "Lugbe", x: 1082, y: 759, size: 26, ink: "#6b6668", dot: [1161, 749], r: 4 },
  { name: "Jos", x: 1467, y: 568, size: 28, weight: 500, dot: [1457, 561] },
  { name: "Kaltungo", x: 1838, y: 584, size: 26, dot: [1951, 575], r: 4 },
  { name: "Jalingo", x: 1972, y: 774, size: 26, dot: [1963, 765] },
  { name: "Lafia", x: 1400, y: 853, size: 28, weight: 500, dot: [1390, 843] },
  { name: "Makurdi", x: 1403, y: 1010, size: 28, weight: 500, dot: [1393, 1000] },
  { name: "Wukari", x: 1652, y: 980, size: 26, dot: [1642, 970] },
  { name: "Gboko", x: 1496, y: 1090, size: 28, weight: 500, dot: [1486, 1081] },
  { name: "Takum", x: 1690, y: 1106, size: 26, ink: "#3f4043", dot: [1681, 1096], r: 4 },
  { name: "Gembu", x: 1945, y: 1215, size: 26, dot: [1939, 1206], r: 4 },
  { name: "Lokoja", x: 1040, y: 995, size: 26, dot: [1030, 986] },
  { name: "Ado Ekiti", x: 738, y: 1034, size: 26, dot: [729, 1024] },
  { name: "Akure", x: 732, y: 1105, size: 28, weight: 500, dot: [723, 1096] },
  { name: "bo", x: 698, y: 1000, size: 28, weight: 500, end: true },
  { name: "Nsukka", x: 1167, y: 1190, size: 26, dot: [1158, 1180] },
  { name: "Enugu", x: 1196, y: 1270, size: 28, weight: 500, dot: [1187, 1261] },
  { name: "Otukpo", x: 1322, y: 1118, size: 26, dot: [1313, 1108] },
  { name: "Benin City", x: 812, y: 1292, size: 26, weight: 500 },
  { name: "Gashaka-Gumti", x: 1906, y: 1040, size: 31, ink: "#14875c" },
  { name: "National Park", x: 1919, y: 1071, size: 31, ink: "#14875c" },
  { name: "Abuja", x: 1196, y: 742, size: 34, weight: 500 },
  { name: "Nigeria", x: 1221, y: 642, size: 47, weight: 700, ink: "#111214" },
];

const shields: [string, number, number, number][] = [
  ["A124", 765, 701, 62], ["A124", 961, 721, 61], ["A2", 1065, 775, 39], ["A234", 1285, 759, 61], ["A345", 1953, 589, 61],
  ["A4", 2006, 680, 38], ["A2", 1029, 884, 38], ["A123", 932, 947, 61], ["A122", 640, 1050, 61], ["A233", 1130, 1050, 61],
  ["A3", 1217, 1105, 39], ["A4", 1694, 904, 39], ["A3", 1388, 1036, 38], ["A4", 1401, 1264, 38],
];

const pins: [number, number][] = [
  [1091, 755], [1560, 670], [1979, 670], [1406, 811], [1655, 872], [724, 932], [935, 941], [1365, 991], [873, 1238], [1965, 961], [1800, 1127],
];

function IncidentMap() {
  const heat = useId();
  return (
    <MapCard aria-label="Map of incident hotspots">
      <MapSvg viewBox="673 561 1410 711" preserveAspectRatio="xMidYMid slice" role="img" aria-label="Nigeria">
        <defs>
          <radialGradient id={heat}>
            <stop offset="0" stopColor="#f56a6a" stopOpacity="0.22" />
            <stop offset="0.5" stopColor="#f56a6a" stopOpacity="0.09" />
            <stop offset="1" stopColor="#f56a6a" stopOpacity="0" />
          </radialGradient>
        </defs>
        <path d={plotAll(sand, true)} fill="#f5f0e4" />
        <path d={plotAll(meadow, true)} fill="#c8f2de" />
        <path d={plotAll(sandIsles, true)} fill="#f5f0e4" />
        <path d={plotAll(woods, true)} fill="#b6eed3" />
        <path d={plotAll(parks, true)} fill="#a2e8c4" />
        <path d={plotAll(clay, true)} fill="#f2e6d3" />
        <path d={plotAll(towns, true)} fill="#faf5f5" />
        <path d={plotAll(lakes, true)} fill="#7dd5ee" />
        <g fill="none" strokeLinejoin="round">
          <path d={plotAll(brooks)} stroke="#7dd5ee" strokeWidth="1.8" />
          <path d={plotAll(rivers)} stroke="#7dd5ee" strokeWidth="3" />
          <path d={plotAll(wideRivers)} stroke="#7dd5ee" strokeWidth="6" />
          <path d={plotAll(lanes)} stroke="#8f9bc9" strokeOpacity="0.62" strokeWidth="1.4" />
          <path d={plotAll(highways)} stroke="#8f9bcb" strokeOpacity="0.6" strokeWidth="3.6" />
          <path d={plotAll(districts)} stroke="#5e6463" strokeWidth="1.5" strokeDasharray="4.4 3.6" />
          <path d={plotAll(frontier)} stroke="#1c2020" strokeWidth="2.6" />
        </g>
        {shields.map(([t, x, y, w], i) => (
          <g key={i}>
            <rect x={x} y={y} width={w} height="24" fill="#6ea042" />
            <text x={x + w / 2} y={y + 19} textAnchor="middle" fontSize="20" fontWeight="500" fill="#ffe03a">{t}</text>
          </g>
        ))}
        {places.map((p) => (
          <g key={p.name}>
            {p.dot && (
              <circle cx={p.dot[0]} cy={p.dot[1]} r={p.r ?? 5} fill="#fff" stroke="#3a3c40" strokeWidth={p.r ? 1.8 : 2.4} />
            )}
            <text
              x={p.x}
              y={p.y}
              fontSize={p.size}
              fontWeight={p.weight ?? 400}
              fill={p.ink ?? "#26282c"}
              textAnchor={p.end ? "end" : "start"}
              stroke="#fff"
              strokeOpacity="0.9"
              strokeWidth="5"
              strokeLinejoin="round"
              paintOrder="stroke"
            >
              {p.name}
            </text>
          </g>
        ))}
        <circle cx="1184" cy="730" r="7.6" fill="#fff" stroke="#1d1f22" strokeWidth="2.4" />
        <circle cx="1184" cy="730" r="4" fill="#1d1f22" />
        {pins.map(([x, y]) => (
          <circle key={`h${x}`} cx={x} cy={y - 16} r="78" fill={`url(#${heat})`} />
        ))}
        {pins.map(([x, y]) => (
          <path
            key={x}
            transform={`translate(${x} ${y})`}
            fill="#f16468"
            fillRule="evenodd"
            d="M0 0C-2.6 0-13.7-9-13.7-18.3A13.7 13.7 0 0 1 13.7-18.3C13.7-9 2.6 0 0 0ZM0-23A4.8 4.8 0 1 0 0-13.4A4.8 4.8 0 1 0 0-23Z"
          />
        ))}
      </MapSvg>
      <HotspotKey>
        <HotspotSwatch />
        Hotspots
      </HotspotKey>
    </MapCard>
  );
}

/* ---------- Trends ---------- */

const TrendsCard = styled(Card)`
  padding: 36px 36px 21px;
`;

const TrendsHeader = styled.div`
  display: flex;
  justify-content: space-between;
  padding-left: 13px;
  margin-bottom: 39px;
`;

const Chart = styled.div`
  display: grid;
  grid-template-columns: 76px 1fr;
  align-items: start;
`;

const AxisY = styled.ul`
  font-size: 20px;
  line-height: 54px;
  color: #2e2f33;
`;

const PlotArea = styled.div`
  position: relative;
  display: grid;
  height: 366px;
`;

const Rules = styled.div`
  grid-area: 1 / 1;
  display: flex;
  flex-direction: column;
  justify-content: space-between;
  padding-top: 33px;
`;

const Rule = styled.span`
  height: 2px;
  background: repeating-linear-gradient(90deg, #ededef 0 9px, transparent 9px 15px);
`;

const Bars = styled.div`
  grid-area: 1 / 1;
  display: flex;
  align-items: flex-end;
  justify-content: space-between;
  z-index: 1;
`;

const Bar = styled.div`
  display: grid;
  align-items: end;
  width: 61px;
`;

const Segment = styled.span<{ $tone: string }>`
  grid-area: 1 / 1;
  border-radius: 6px 6px 0 0;
  background: ${(p) => p.$tone};
`;

const AxisX = styled.ul`
  display: flex;
  justify-content: space-between;
  padding-left: 60px;
  font-size: 20px;
  line-height: 28px;
  color: #2e2f33;
`;

const Legend = styled.ul`
  display: flex;
  gap: 47px;
  margin-top: 40px;
  padding-left: 4px;
  font-size: 18px;
  line-height: 24px;
  color: #929295;
`;

const LegendItem = styled.li`
  display: flex;
  align-items: center;
  gap: 4px;
`;

const LegendSwatch = styled.span<{ $tone: string }>`
  width: 18px;
  height: 18px;
  border-radius: 4px;
  background: ${(p) => p.$tone};
`;

const Tooltip = styled.div`
  position: absolute;
  z-index: 2;
  top: -23px;
  left: 82px;
  width: 460px;
  padding: 9px 24px;
  border: 2px solid #e5e4ee;
  border-radius: 16px;
  background: #fff;
  box-shadow: 0 5px 8px rgba(30, 30, 50, 0.14);
`;

const TooltipRow = styled.div`
  display: flex;
  justify-content: space-between;
  line-height: 54px;
`;

const TooltipTerm = styled.dt`
  color: #76777b;
`;

const TooltipValue = styled.dd`
  color: #44127a;
`;

const TooltipDate = styled.p`
  font-size: 20px;
  line-height: 48px;
  text-align: center;
  color: #98989b;
`;

const TooltipTail = styled.svg`
  position: absolute;
  top: 122px;
  left: -31px;
`;

const tone = { security: "#9333ea", safety: "#4a1775", transport: "#34e5eb", emergency: "#fec574" };

/* Heights run from the baseline, tallest first, so that each part covers the foot of the one behind. */
const months: { name: string; parts: [keyof typeof tone, number][] }[] = [
  { name: "Jan", parts: [["emergency", 254], ["transport", 224], ["safety", 194], ["security", 171]] },
  { name: "Feb", parts: [["security", 160]] },
  { name: "Mar", parts: [["transport", 160], ["safety", 58], ["security", 39]] },
  { name: "Apr", parts: [["security", 194]] },
  { name: "May", parts: [["transport", 75]] },
  { name: "Jun", parts: [["emergency", 185], ["transport", 171], ["safety", 156], ["security", 131]] },
];

const ticks = ["15k", "10k", "5k", "1k", "500", "200", "50"];
const legend: [string, string][] = [
  ["Security", tone.security],
  ["Safety", tone.safety],
  ["Transportation Violation", tone.transport],
  ["Emergency Situations", tone.emergency],
];
const breakdown = [
  ["Emergency Situations", "8,000"],
  ["Transportation Specific", "5,000"],
  ["Safety", "1,000"],
  ["Security", "5000"],
];

function Trends() {
  return (
    <TrendsCard>
      <TrendsHeader>
        <CardTitle>Incident Trends (6 months)</CardTitle>
        <Dropdown kind="range" label="Period" options={["Last 6 months", "Last 12 months"]} />
      </TrendsHeader>
      <Chart>
        <AxisY>
          {ticks.map((t) => (
            <li key={t}>{t}</li>
          ))}
        </AxisY>
        <PlotArea>
          <Rules>
            {ticks.map((t) => (
              <Rule key={t} />
            ))}
          </Rules>
          <Bars>
            {months.map((m) => (
              <Bar key={m.name}>
                {m.parts.map(([k, h]) => (
                  <Segment key={k} $tone={tone[k]} style={{ height: h }} />
                ))}
              </Bar>
            ))}
          </Bars>
          <Tooltip>
            <TooltipTail width="32" height="38" viewBox="0 0 32 38" aria-hidden="true">
              <path d="M32 4 2.5 18 32 34Z" fill="#fff" />
              <path d="M29 5.4 2.5 18 29 32.4" fill="none" stroke="#eeeef2" strokeWidth="1.5" />
            </TooltipTail>
            <dl>
              {breakdown.map(([term, value]) => (
                <TooltipRow key={term}>
                  <TooltipTerm>{term}</TooltipTerm>
                  <TooltipValue>{value}</TooltipValue>
                </TooltipRow>
              ))}
            </dl>
            <TooltipDate>June, 2025</TooltipDate>
          </Tooltip>
        </PlotArea>
      </Chart>
      <AxisX>
        {months.map((m) => (
          <li key={m.name}>{m.name}</li>
        ))}
      </AxisX>
      <Legend>
        {legend.map(([name, colour]) => (
          <LegendItem key={name}>
            <LegendSwatch $tone={colour} />
            {name}
          </LegendItem>
        ))}
      </Legend>
    </TrendsCard>
  );
}

/* ---------- Live incidents ---------- */

const LiveCard = styled(Card)`
  padding: 47px 36px 42px 35px;
`;

const LiveHeader = styled.div`
  display: flex;
  align-items: flex-start;
  justify-content: space-between;
  padding-left: 12px;
  margin-bottom: 72px;
`;

const TableBox = styled.div`
  max-height: 1151px;
  overflow: hidden;
  border-radius: 14px;
  box-shadow: 0 2px 4px rgba(20, 20, 40, 0.12);
`;

const Table = styled.table`
  width: 100%;
  table-layout: fixed;
  border-collapse: separate;
  border-spacing: 0;
  font-size: 24px;
  text-align: left;
`;

const Col = styled.col<{ $w: number }>`
  width: ${(p) => p.$w}px;
`;

const Th = styled.th<{ $end?: boolean }>`
  height: 78px;
  padding: ${(p) => (p.$end ? "2px 30px 0 0" : "2px 0 0 30px")};
  border-bottom: 2px solid #e3e3e6;
  background: #f9fafc;
  font-weight: 400;
  color: #76777b;
  text-align: ${(p) => (p.$end ? "right" : "left")};
`;

const Td = styled.td<{ $end?: boolean; $strong?: boolean }>`
  height: 126px;
  padding: ${(p) => (p.$end ? "0 30px 12px 0" : "0 0 12px 30px")};
  border-bottom: 2px solid #e3e3e6;
  color: ${(p) => (p.$strong ? "#2b2c30" : "#76777b")};
  text-align: ${(p) => (p.$end ? "right" : "left")};

  &:first-child,
  &:nth-child(2) { padding-left: 32px; }
`;

const EyeButton = styled.button`
  display: inline-grid;
  place-items: center;
  width: 47px;
  height: 40px;
  padding: 0;
  border: 0;
  background: none;
  vertical-align: middle;
`;

const times = ["17:20:34", "17:20:32", "17:20:30", "16:20:34", "16:20:24", "16:20:19", "16:20:02", "15:20:34", "15:20:31"];

function LiveIncidents() {
  return (
    <LiveCard>
      <LiveHeader>
        <Heading>
          <CardTitle $large>Live Incidents</CardTitle>
          <Muted $face={`Lato, ${sans}`}>Showing for 24th June, 2025</Muted>
        </Heading>
        <Dropdown kind="day" label="Day" options={["Today", "Yesterday"]} />
      </LiveHeader>
      <TableBox>
        <Table>
          <colgroup>
            <Col $w={230} />
            <Col $w={304} />
            <Col $w={303} />
            <Col $w={300} />
            <Col $w={170} />
          </colgroup>
          <thead>
            <tr>
              <Th>Incident ID</Th>
              <Th>Date &amp; Time</Th>
              <Th>Location</Th>
              <Th>Incident Category</Th>
              <Th $end>Actions</Th>
            </tr>
          </thead>
          <tbody>
            {times.map((t) => (
              <tr key={t}>
                <Td $strong>INC-00125</Td>
                <Td>24/06/24, {t}</Td>
                <Td $strong>Lagos</Td>
                <Td>Transportation Specific</Td>
                <Td $end>
                  <EyeButton type="button" aria-label={`View incident at ${t}`}>
                    <svg width="27" height="22" viewBox="0 0 27 22" fill="none">
                      <path d="M13.5 0C20 0 24.8 5 26.3 8.8Q27.2 11 26.3 13.2C24.8 17 20 22 13.5 22S2.2 17 .7 13.2Q-.2 11 .7 8.8C2.2 5 7 0 13.5 0Z" fill="#75757a" />
                      <circle cx="13.5" cy="11" r="4.7" stroke="#fff" strokeWidth="1.9" />
                    </svg>
                  </EyeButton>
                </Td>
              </tr>
            ))}
          </tbody>
        </Table>
      </TableBox>
    </LiveCard>
  );
}

/* ---------- Dashboard ---------- */

function Dashboard() {
  return (
    <Frame>
      <Screen>
        <TopBar>
          <Heading>
            <PageTitle>Incident Data (All Zones)</PageTitle>
            <Muted>28th April, 2025. 5:00PM</Muted>
          </Heading>
          <Dropdown kind="zones" label="Zone" options={["All Zones"]} />
        </TopBar>
        <Columns>
          <Stack>
            <IncidentMap />
            <Trends />
          </Stack>
          <LiveIncidents />
        </Columns>
      </Screen>
    </Frame>
  );
}

export default function App() {
  return (
    <>
      <GlobalStyle />
      <Stage>
        <Backdrop aria-hidden="true" inert>
          <BackdropHalf $side="left">
            <Shrunk $side="left">
              <Dashboard />
            </Shrunk>
          </BackdropHalf>
          <BackdropHalf $side="right">
            <Shrunk $side="right">
              <Dashboard />
            </Shrunk>
          </BackdropHalf>
        </Backdrop>
        <Foreground>
          <Dashboard />
        </Foreground>
      </Stage>
    </>
  );
}
